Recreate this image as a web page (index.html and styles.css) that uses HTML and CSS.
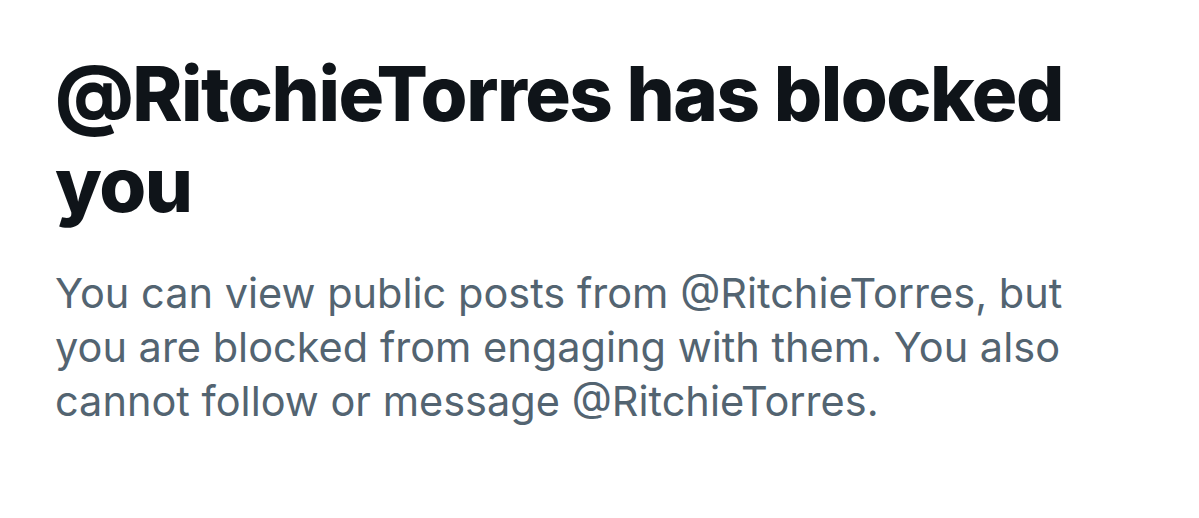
FILE: index.html
```html
<!DOCTYPE html>
<html>
<head>
<meta charset="utf-8">
<link rel="stylesheet" href="styles.css">
</head>
<body>
<main class="page">
  <h1 class="title">@RitchieTorres has blocked you</h1>
  <p class="desc">You can view public posts from @RitchieTorres, but you are blocked from engaging with them. You also cannot follow or message @RitchieTorres.</p>
</main>
</body>
</html>
```
FILE: styles.css
```css
html, body {
  margin: 0;
  padding: 0;
  background: #ffffff;
}
.page {
  width: 1199px;
  height: 518px;
  box-sizing: border-box;
  padding: 48px 40px 0 55px;
  font-family: Inter, "Noto Sans", sans-serif;
}
.title {
  margin: 0;
  font-size: 76px;
  line-height: 91px;
  font-weight: 800;
  color: #0f1419;
  letter-spacing: -1.5px;
  width: 1090px;
}
.desc {
  margin: 36px 0 0;
  font-size: 41.5px;
  line-height: 54px;
  font-weight: 400;
  color: #536471;
  width: 1080px;
}
```
